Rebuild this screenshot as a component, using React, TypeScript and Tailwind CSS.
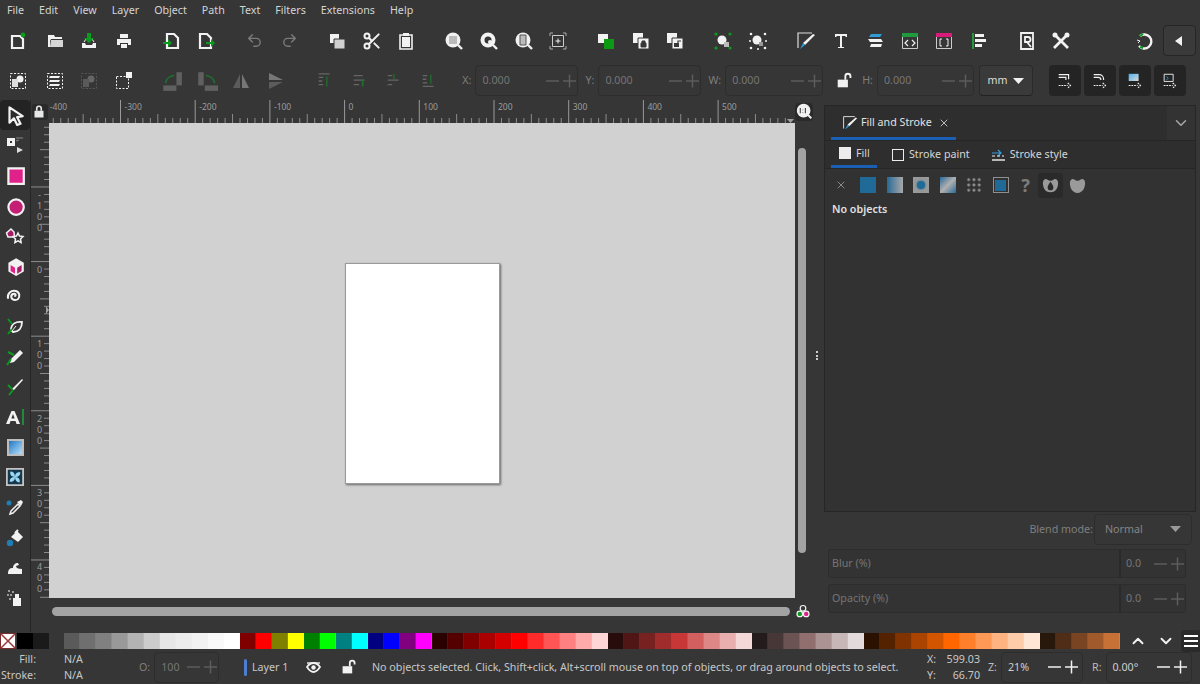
import type { ReactNode } from "react";
import { Scissors, Undo2, Redo2, ChevronDown, ChevronUp, X } from "lucide-react";

const W = "#f2f2f2";
const G = "#0a9a1e";
const D = "#7a7a7a";
const B = "#1f7fb5";
const P = "#e0218a";

function Ic({ children, size = 20, className = "" }: { children: ReactNode; size?: number; className?: string }) {
  return (
    <svg width={size} height={size} viewBox="0 0 20 20" fill="none" className={className}>
      {children}
    </svg>
  );
}

function LockIc({ open = false, size = 16, color = W, className = "" }: { open?: boolean; size?: number; color?: string; className?: string }) {
  return (
    <Ic size={size} className={className}>
      <path d="M2 9h12v9H2z" fill={color} />
      {open
        ? <path d="M11 9V5a3 3 0 0 1 6 0v2" stroke={color} strokeWidth="2.200" />
        : <path d="M5 9V6a3 3 0 0 1 6 0v3" stroke={color} strokeWidth="2.200" transform="translate(0 0)" />}
    </Ic>
  );
}

const doc = "M5 3h7l4 4v10H5z";

const topGroups: ReactNode[][] = [
  [
    <Ic><path d="M4 5h8l3 3v9H4z" fill="none" stroke={W} strokeWidth="2.200" /><circle cx="15" cy="4" r="2.400" fill={G} /></Ic>,
    <Ic><path d="M3 4h6l1 2h7v2H6L5 10v6H3z" fill={W} /><path d="M6 9h12v7H5z" fill={W} opacity=".85" /></Ic>,
    <Ic><path d="M3 12h3l1 2h6l1-2h3v5H3z" fill={W} /><path d="M5 11l2-3h6l2 3" stroke={W} /><path d="M8 2h4v5h3l-5 5-5-5h3z" fill={G} /></Ic>,
    <Ic><path d="M6 3h8v4H6z" fill={W} /><path d="M3 8h14v6h-3v-2H6v2H3z" fill={W} /><path d="M7 13h6v4H7z" fill={W} /></Ic>,
  ],
  [
    <Ic><path d={doc} stroke={W} strokeWidth="2.200" /><path d="M1 11h5V8l4 4-4 4v-3H1z" fill={G} /></Ic>,
    <Ic><path d={doc} stroke={W} strokeWidth="2.200" transform="translate(-2 0)" /><path d="M9 11h5V8l4 4-4 4v-3H9z" fill={G} /></Ic>,
  ],
  [<Undo2 size={17} color={D} />, <Redo2 size={17} color={D} />],
  [
    <Ic><path d="M3 3h9v9H3z" fill={W} /><path d="M7 8h11v10H7z" fill="#d0d0d0" stroke="#363636" /></Ic>,
    <Scissors size={20} color={W} strokeWidth={2.400} />,
    <Ic><path d="M4 4h12v14H4z" fill="none" stroke={W} strokeWidth="1.600" /><path d="M6 6h8v10H6z" fill={W} /><path d="M7 2h6v3H7z" fill={W} /></Ic>,
  ],
  [
    <Ic><circle cx="9" cy="9" r="7.500" fill={W} /><path d="M5 5h8v8H5z" fill="#bbb" /><path d="M14 14l4 4" stroke={W} strokeWidth="2.400" /></Ic>,
    <Ic><circle cx="9" cy="9" r="7.500" fill={W} /><circle cx="9" cy="9" r="3.500" fill="#363636" /><circle cx="11" cy="11" r="2" fill={W} /><path d="M14 14l4 4" stroke={W} strokeWidth="2.400" /></Ic>,
    <Ic><circle cx="9" cy="9" r="7.500" fill={W} /><path d="M6 4h6v10H6z" fill="#bbb" stroke="#555" /><path d="M14 14l4 4" stroke={W} strokeWidth="2.400" /></Ic>,
    <Ic><path d="M2 5V2h3M15 2h3v3M18 15v3h-3M5 18H2v-3" stroke="#aaa" /><path d="M4.500 4.500h11v11h-11z" stroke="#ccc" /><path d="M10 7.500v5M7.500 10h5" stroke={W} /></Ic>,
  ],
  [
    <Ic><path d="M2 3h10v9H2z" fill={W} /><path d="M8 8h10v10H8z" fill="#0c9a12" /></Ic>,
    <Ic><path d="M2 2h10v10H2z" fill={W} /><path d="M7 7h11v11H7z" fill={W} stroke="#363636" /><path d="M10 12h5v4h-5zM11 12v-2h3v2" fill="#363636" stroke="#363636" /></Ic>,
    <Ic><path d="M2 2h10v10H2z" fill={W} /><path d="M7 7h11v11H7z" fill={W} stroke="#363636" /><path d="M9 12h5v4H9z" fill="#363636" /><path d="M13 12v-2h3" stroke="#363636" strokeWidth="1.200" /></Ic>,
  ],
  [
    <Ic><circle cx="9" cy="9" r="4.500" fill={W} /><path d="M11 11h5v5h-5z" fill="#bbb" /><g fill={G}><circle cx="3" cy="3" r="1.600" /><circle cx="17" cy="3" r="1.600" /><circle cx="3" cy="17" r="1.600" /><circle cx="17" cy="17" r="1.600" /></g></Ic>,
    <Ic><circle cx="9" cy="9" r="4.500" fill={W} /><path d="M11 11h4v4h-4z" fill="#999" /><g fill={W}><circle cx="3" cy="3" r="1.300" /><circle cx="17" cy="3" r="1.300" /><circle cx="3" cy="17" r="1.300" /><circle cx="17" cy="17" r="1.300" /><circle cx="2" cy="10" r="1" /><circle cx="18" cy="10" r="1" /><circle cx="10" cy="18" r="1" /></g></Ic>,
  ],
  [
    <Ic><path d="M2 17V2h14" stroke="#ddd" strokeWidth="1.200" /><path d="M17 3l2 1L9 14l-2-2z" fill={W} /><path d="M7 12l2 2-5 4z" fill="#2f9bd8" /></Ic>,
    <Ic><path d="M4 3h12v3h-1l-1-1h-3v11h2v1H7v-1h2V5H6L5 6H4z" fill={W} /></Ic>,
    <Ic><path d="M6 3h11l-2 3H4z" fill="#2f9bd8" /><path d="M3 8h13l2 3H5z" fill={W} /><path d="M6 13h11l-1 3H5z" fill={W} /></Ic>,
    <Ic><path d="M2.500 2.500h15v15h-15z" stroke="#ccc" /><path d="M2 2h16v4H2z" fill="#1f9a3c" /><path d="M8 9l-3 3 3 3M12 9l3 3-3 3" stroke={W} strokeWidth="1.200" /></Ic>,
    <Ic><path d="M2.500 2.500h15v15h-15z" stroke="#ccc" /><path d="M2 2h16v4H2z" fill="#d81b78" /><path d="M8 8H6v7h2M12 8h2v7h-2" stroke={W} /></Ic>,
    <Ic><path d="M3 2h2v16H3z" fill="#1f9a3c" /><path d="M6 3h9v3H6zM6 8h11v3H6zM6 13h7v3H6z" fill={W} /></Ic>,
  ],
  [
    <Ic><path d="M4 2h12v16H4z" stroke={W} strokeWidth="1.800" /><path d="M8 6h3a2.500 2.500 0 0 1 0 5H8zM10 11l4 5" stroke={W} strokeWidth="1.800" /></Ic>,
    <Ic><path d="M3 3l14 14M17 3L3 17" stroke={W} strokeWidth="2.800" /><circle cx="4" cy="4" r="2.500" fill={W} /><circle cx="16" cy="4" r="2.500" fill={W} /></Ic>,
  ],
];

const bottomIcons: ReactNode[] = [
  <Ic><path d="M2.500 2.500h15v15h-15z" stroke={W} strokeDasharray="2 1.500" /><circle cx="12" cy="8" r="3.500" fill={W} /><path d="M4 8h6v8H4z" fill="#ddd" /></Ic>,
  <Ic><path d="M2.500 2.500h15v15h-15z" stroke={W} strokeDasharray="2 1.500" /><path d="M5 5h10L14 7H4zM5 9h10l-1 2H4zM5 13h10l-1 2H4z" fill={W} /></Ic>,
  <Ic><path d="M2.500 2.500h15v15h-15z" stroke="#555" strokeDasharray="2 1.500" /><circle cx="12" cy="8" r="3.500" fill="#666" /><path d="M4 8h6v8H4z" fill="#5a5a5a" /></Ic>,
  <Ic><path d="M2.500 5.500h12v12h-12z" stroke={W} strokeDasharray="2 1.500" /><path d="M12 1h6v6h-6z" fill={W} /></Ic>,
];
const dimTransform: ReactNode[] = [
  <Ic size={22}><path d="M2 14h12v5H2z" fill="#606060" /><path d="M14 2h5v12h-5z" fill="#606060" /><path d="M4 12a9 9 0 0 1 8-7" stroke="#1f6e2c" strokeWidth="1.500" /></Ic>,
  <Ic size={22}><path d="M8 14h12v5H8z" fill="#606060" /><path d="M2 2h5v12H2z" fill="#606060" /><path d="M9 5a9 9 0 0 1 8 7" stroke="#1f6e2c" strokeWidth="1.500" /></Ic>,
  <Ic><path d="M9 3v14H2z" fill="#5c5c5c" /><path d="M11 3v14h7z" fill="#777" /></Ic>,
  <Ic><path d="M3 9h14L3 2z" fill="#777" /><path d="M3 11h14L3 18z" fill="#5c5c5c" /></Ic>,
];
const alignIcons: ReactNode[] = [
  <Ic size={18}><path d="M3 2h12M3 6h5M3 10h4M3 14h5" stroke="#666" strokeWidth="1.500" /><path d="M12 5v11" stroke="#1f6e2c" strokeWidth="1.500" /></Ic>,
  <Ic size={18}><path d="M3 4h10M3 9h12M3 14h6" stroke="#666" strokeWidth="1.500" /><path d="M13 8v8" stroke="#1f6e2c" strokeWidth="2" /></Ic>,
  <Ic size={18}><path d="M3 4h5M3 9h12M3 14h5" stroke="#666" strokeWidth="1.500" /><path d="M10 2v6" stroke="#1f6e2c" strokeWidth="1.500" /></Ic>,
  <Ic size={18}><path d="M3 16h12M3 4h5M3 8h4M3 12h5" stroke="#666" strokeWidth="1.500" /><path d="M12 3v10" stroke="#1f6e2c" strokeWidth="1.500" /></Ic>,
];

const snapIcons: ReactNode[] = [
  <Ic size={18}><path d="M3 3h11v5M3 6h8v3" stroke={W} strokeWidth="1.300" /><path d="M3 15h10M13 12l3 3-3 3" stroke={W} strokeWidth="1.300" strokeDasharray="2 1" /></Ic>,
  <Ic size={18}><path d="M3 3h6a5 5 0 0 1 5 5v1M3 6h5a3 3 0 0 1 3 3" stroke={W} strokeWidth="1.300" /><path d="M3 15h10M13 12l3 3-3 3" stroke={W} strokeWidth="1.300" strokeDasharray="2 1" /></Ic>,
  <Ic size={18}><path d="M3 2h11v8H3z" fill="url(#snapGrad)" /><path d="M3 15h10M13 12l3 3-3 3" stroke={W} strokeWidth="1.300" strokeDasharray="2 1" /></Ic>,
  <Ic size={18}><path d="M3.500 2.500h10v8h-10z" stroke={W} /><path d="M6 5l2 2-2 2" stroke="#3aa0e0" /><path d="M3 15h10M13 12l3 3-3 3" stroke={W} strokeWidth="1.300" strokeDasharray="2 1" /></Ic>,
];

const toolIcons: ReactNode[] = [
  <Ic size={22}><path d="M5 3l12 8-5 1 3 6-3 1-3-6-4 4z" fill="#2a2a2a" stroke={W} strokeWidth="2" strokeLinejoin="round" /></Ic>,
  <Ic><path d="M2 3h8v8H2z" fill={W} /><path d="M5 6h2v2H5z" fill="#333" /><path d="M11 3h7M11 6l3-1" stroke="#888" /><path d="M12 12l6 3-6 3z" fill="#ddd" /></Ic>,
  <Ic size={22}><path d="M4 4h14v14H4z" fill={P} stroke={W} strokeWidth="2" /></Ic>,
  <Ic size={22}><circle cx="11" cy="11" r="7" fill="#c41f74" stroke={W} strokeWidth="2" /></Ic>,
  <Ic><path d="M6 3l3 3 .5 5H3L1.500 7z" fill="#a81b68" stroke={W} strokeWidth="1.500" /><path d="M13 7l1.500 3 3.500.5-2.500 2.500.6 3.500-3.100-1.700-3.100 1.700.6-3.500L8 10.500l3.500-.5z" fill="#333" stroke={W} strokeWidth="1.500" /></Ic>,
  <Ic size={22}><path d="M11 3l7 4v8l-7 4-7-4V7z" fill={W} /><path d="M6 9l4 2.500V17l-4-2.500z" fill={P} /><path d="M16 9l-4 2.500V17l4-2.500z" fill="#a81b68" /></Ic>,
  <Ic><path d="M10 10c1.500-1 0-3-2-2-3 1.500-2 6 2 6 5 0 6-7 1-9-5-1.500-9 3-8 7" stroke={W} strokeWidth="2" strokeLinecap="round" /></Ic>,
  <Ic><path d="M6 14C6 8 11 5 17 6c0 6-3 10-9 10z" stroke={W} strokeWidth="1.800" /><path d="M7 15l4-5" stroke={W} /><path d="M3 18l4-5M3 3l4 5" stroke={G} strokeWidth="2" /></Ic>,
  <Ic><path d="M15 3l3 3-9 9-4 1 1-4z" fill={W} /><path d="M2 18l4-6M3 5l6 3" stroke={G} strokeWidth="2" /></Ic>,
  <Ic><path d="M17 2l1 1-9 10-2-1z" fill={W} /><path d="M4 18l4-5M3 8l4 4" stroke={G} strokeWidth="2" /></Ic>,
  <Ic size={20}><path d="M1 17L6.500 4h3L15 17h-3.500l-1-3h-5l-1 3zM6.300 11.500h3.400L8 7z" fill={W} /><path d="M17 2h2v16h-2z" fill="#1f8a3c" /></Ic>,
  <div className="size-[17px] border-2 border-[#bdbdbd] bg-gradient-to-br from-[#1577c2] to-[#b5e0fb]" />,
  <Ic size={18}><path d="M1 1h18v18H1z" fill="#15384d" stroke="#c4c4c4" strokeWidth="2" /><path d="M10 10C5 10 4 6 5 4c3 0 5 2 5 6zM10 10c5 0 6 4 5 6-3 0-5-2-5-6zM10 10c0-5 4-6 6-5 0 3-2 5-6 5zM10 10c0 5-4 6-6 5 0-3 2-5 6-5z" fill="#9ad8f5" /></Ic>,
  <Ic><path d="M6 13l7-7 2 2-7 7-3 1z" fill="#333" stroke={W} strokeWidth="1.500" /><path d="M12 4l4-2 2 2-2 4z" fill={W} /><circle cx="4" cy="5" r="2.500" fill={B} /></Ic>,
  <Ic><path d="M6 9l6-6 6 6-5 5z" fill={W} /><path d="M10 5l3-3" stroke={W} strokeWidth="2" /><circle cx="5" cy="15" r="3.200" fill={B} /></Ic>,
  <Ic><path d="M3 16c0-5 2-6 5-6 0-3 2-5 5-5l1 2-3 1c0 2 2 3 6 3v5z" fill={W} /></Ic>,
  <Ic><path d="M8 10h8v8H8zM10 6h4v4h-4z" fill={W} /><g fill="#bbb"><circle cx="4" cy="3" r="1" /><circle cx="8" cy="4" r="1" /><circle cx="3" cy="7" r="1" /><circle cx="6" cy="7" r="1" /><circle cx="5" cy="11" r="1" /></g></Ic>,
];

const palette = [
  "#5a5a5a", "#6f6f6f", "#808080", "#999999", "#b3b3b3", "#cccccc", "#e6e6e6", "#ececec", "#f2f2f2", "#f9f9f9", "#ffffff",
  "#800000", "#ff0000", "#808000", "#ffff00", "#008000", "#00ff00", "#008080", "#00ffff", "#000080", "#0000ff", "#800080", "#ff00ff",
  "#2b0000", "#550000", "#800000", "#aa0000", "#d40000", "#ff0000", "#ff2a2a", "#ff5555", "#ff8080", "#ffaaaa", "#ffd5d5",
  "#280b0b", "#501616", "#782121", "#a02c2c", "#c83737", "#d35f5f", "#de8787", "#e9afaf", "#f4d7d7",
  "#241c1c", "#483737", "#6c5353", "#916f6f", "#ac9393", "#c8b7b7", "#e3dbdb",
  "#2b1100", "#552200", "#803300", "#aa4400", "#d45500", "#ff6600", "#ff7f2a", "#ff9955", "#ffb380", "#ffccaa", "#ffe6d5",
  "#28170b", "#502d16", "#784421", "#a05a2c", "#c87137",
];

function Cell({ children, extra = false }: { children: ReactNode; extra?: boolean }) {
  return <div className={`flex w-[34.600px] items-center justify-center ${extra ? "mr-[2px]" : ""}`}>{children}</div>;
}

function Spin({ label, value, w, dim = true }: { label: string; value: string; w: string; dim?: boolean }) {
  return (
    <div className="flex items-center gap-[4px]">
      <span className={dim ? "text-[#7e7e7e]" : "text-[#bdbdbd]"}>{label}</span>
      <div className={`flex h-[31px] items-center justify-between rounded-[4px] border border-[#2d2d2d] pl-[6px] ${dim ? "pr-0" : "pr-[3px]"} ${w}`}>
        <span className={dim ? "text-[#757575]" : "text-[#cfcfcf]"}>{value}</span>
        <PlusMinus dim={dim} />
      </div>
    </div>
  );
}

function PlusMinus({ dim = true }: { dim?: boolean }) {
  const c = dim ? "#5c5c5c" : "#f0f0f0";
  return (
    <svg width="32" height="16" viewBox="0 0 32 16" fill="none">
      <path d="M1 8h13M18 8h13M24.500 1.500v13" stroke={c} strokeWidth="1.500" />
    </svg>
  );
}

function TopRuler() {
  const labels = ["-400", "-300", "-200", "-100", "0", "100", "200", "300", "400", "500"];
  return (
    <svg width="746" height="23" viewBox="0 0 746 23" className="block">
      {Array.from({ length: 100 }, (_, i) => {
        const x = i * 7.47 - 3.2;
        if (x < 0 || x > 744) return null;
        const h = i % 10 === 0 ? 23 : i % 5 === 0 ? 9 : 5;
        return <line key={i} x1={x} x2={x} y1={23 - h} y2={23} stroke={i % 10 === 0 ? "#9a9a9a" : "#8c8c8c"} strokeWidth="1" />;
      })}
      {labels.map((t, i) => (
        <text key={t} x={i * 74.7 + 0.8} y="10" fontSize="8.500" fill="#9c9c9c" fontFamily="Noto Sans, sans-serif">
          {t}
        </text>
      ))}
      <path d="M738 19h7l-3.500 4z" fill="#a0a0a0" />
    </svg>
  );
}

function LeftRuler() {
  const labels: [number, string][] = [[187, "-100"], [262, "0"], [336, "100"], [411, "200"], [485, "300"], [559, "400"]];
  return (
    <svg width="18" height="475" viewBox="0 0 18 475" className="block">
      {Array.from({ length: 64 }, (_, i) => {
        const y = i * 7.46 + 4.3;
        const w = i % 10 === 8 ? 18 : i % 5 === 3 ? 9 : 5;
        return <line key={i} x1={18 - w} x2={18} y1={y} y2={y} stroke="#8c8c8c" strokeWidth="1" />;
      })}
      {labels.map(([y, t]) =>
        t.split("").map((c, i) => (
          <text key={`${y}-${i}`} x="8.500" y={y - 123 + 11 + i * 11} fontSize="9" textAnchor="middle" fill="#9c9c9c" fontFamily="Noto Sans, sans-serif">
            {c}
          </text>
        )),
      )}
      <path d="M15 183l3 4-3 4z" fill="#a0a0a0" />
    </svg>
  );
}

export default function App() {
  return (
    <div className="flex h-[684px] w-[1200px] flex-col overflow-hidden bg-[#363636] font-['Noto_Sans','Open_Sans',sans-serif] text-[10.700px] text-[#d6d6d6]">
      <div className="flex h-[20px] items-center pl-[7px] text-[#d4d4d4]">
        {["File", "Edit", "View", "Layer", "Object", "Path", "Text", "Filters", "Extensions", "Help"].map((m) => (
          <span key={m} className="mr-[15px]">{m}</span>
        ))}
      </div>

      <div className="flex h-[41px] items-center pl-px">
        {topGroups.map((group, i) => (
          <div key={i} className="mr-[13.400px] flex">
            {group.map((ic, j) => <Cell key={j} extra={i === 0 && j === 0}>{ic}</Cell>)}
          </div>
        ))}
        <div className="ml-[35px] flex items-center">
          <Cell>
            <Ic><path d="M6 5a7 7 0 1 1-1 10" stroke={W} strokeWidth="2.400" /><path d="M6 5l3-2" stroke={G} strokeWidth="2" /><path d="M3 9l3 1-2 2" stroke={W} /><path d="M6 16l3 1" stroke={G} strokeWidth="2" /></Ic>
          </Cell>
          <div className="ml-[1px] flex h-[31px] w-[33px] items-center justify-center rounded-[4px] border border-[#262626] bg-[#3a3a3a]">
            <svg width="8" height="10" viewBox="0 0 8 10"><path d="M7 0v10L0 5z" fill={W} /></svg>
          </div>
        </div>
      </div>

      <div className="flex h-[39px] items-center pl-px">
        <div className="mr-[13.600px] flex">{bottomIcons.map((ic, i) => <Cell key={i} extra={i === 0}>{ic}</Cell>)}</div>
        <div className="mr-[14.600px] flex">{dimTransform.map((ic, i) => <Cell key={i}>{ic}</Cell>)}</div>
        <div className="flex">{alignIcons.map((ic, i) => <Cell key={i}>{ic}</Cell>)}</div>
        <div className="ml-[16px] flex items-center gap-[7px]">
          <Spin label="X:" value="0.000" w="w-[103px]" />
          <Spin label="Y:" value="0.000" w="w-[103px]" />
          <Spin label="W:" value="0.000" w="w-[98px]" />
        </div>
        <div className="ml-[12px] flex w-[18px] justify-center">
          <LockIc open size={17} />
        </div>
        <div className="ml-[9px]"><Spin label="H:" value="0.000" w="w-[97px]" /></div>
        <div className="ml-[5px] flex h-[31px] w-[54px] items-center justify-center gap-[6px] rounded-[4px] border border-[#2a2a2a] border-b-[#222] bg-[#3a3a3a] text-[#dcdcdc]">
          mm
          <svg width="11" height="6" viewBox="0 0 11 6"><path d="M0 0h11L5.500 6z" fill={W} /></svg>
        </div>
        <div className="ml-[16px] flex gap-[3px]">
          {snapIcons.map((ic, i) => (
            <div key={i} className="flex h-[31px] w-[32px] items-center justify-center rounded-[4px] bg-[#242424]">{ic}</div>
          ))}
        </div>
      </div>

      <svg width="0" height="0" className="absolute">
        <defs>
          <linearGradient id="snapGrad" x1="0" y1="0" x2="1" y2="1">
            <stop offset="0" stopColor="#4fb3ee" />
            <stop offset="1" stopColor="#d8d8d8" />
          </linearGradient>
        </defs>
      </svg>

      <div className="flex h-[532px]">
        <div className="flex w-[31px] shrink-0 flex-col items-center border-r border-[#262626]">
          {toolIcons.map((ic, i) => (
            <div key={i} className={`flex h-[30.200px] w-full shrink-0 items-center justify-center ${i === 0 ? "rounded-[4px] bg-[#232323]" : ""}`}>
              {ic}
            </div>
          ))}
        </div>

        <div className="flex w-[793px] shrink-0 flex-col">
          <div className="flex h-[23px]">
            <div className="flex w-[18px] items-center justify-center">
              <div className="flex size-[16px] items-center justify-center rounded-[3px] bg-[#2a2a2a]">
                <LockIc size={15} color="#e8e8e8" />
              </div>
            </div>
            <TopRuler />
            <div className="ml-[1px] flex w-[16px] items-center justify-center">
              <div className="flex size-[18px] shrink-0 items-center justify-center rounded-[4px] bg-[#2a2a2a]">
                <Ic size={17}><circle cx="9" cy="9" r="8" fill={W} /><path d="M5 6v6M8 8v.500M8 11v.500M11 6v6" stroke="#333" strokeWidth="1.200" /><path d="M14 14l4 4" stroke={W} strokeWidth="2.400" /></Ic>
              </div>
            </div>
          </div>
          <div className="flex h-[475px]">
            <LeftRuler />
            <div className="relative w-[746px] bg-[#d1d1d1]">
              <div className="absolute left-[296px] top-[140px] h-[221px] w-[155px] border border-[#9a9a9a] bg-white shadow-[1px_1px_2px_rgba(0,0,0,0.5)]" />
            </div>
            <div className="flex w-[29px] items-start pl-[3px]">
              <div className="mt-[25px] h-[405px] w-[8px] rounded-full bg-[#a3a3a3]" />
              <div className="ml-[10px] mt-[228px] flex flex-col gap-[1.500px]">
                <span className="size-[2px] rounded-full bg-white" />
                <span className="size-[2px] rounded-full bg-white" />
                <span className="size-[2px] rounded-full bg-white" />
              </div>
            </div>
          </div>
          <div className="flex items-center pl-[21px] pt-[5px]">
            <div className="h-[9px] w-[738px] rounded-full bg-[#a3a3a3]" />
            <div className="ml-[5px] flex size-[16px] items-center justify-center">
              <Ic size={17}><circle cx="10" cy="6" r="3.500" stroke={W} strokeWidth="1.500" /><circle cx="6" cy="13" r="3.500" fill={G} stroke={W} strokeWidth="1.500" /><circle cx="14" cy="13" r="3.500" fill={P} stroke={W} strokeWidth="1.500" /></Ic>
            </div>
          </div>
        </div>

        <div className="flex w-[372px] shrink-0 flex-col pt-[5px]">
          <div className="flex h-[407px] flex-col border border-[#262626] bg-[#323232]">
            <div className="flex h-[35px] shrink-0 items-stretch justify-between border-b border-[#262626] bg-[#2e2e2e]">
              <div className="ml-[6px] flex w-[125px] items-center gap-[3px] border-b-[3px] border-[#1a5fb4] pl-[11px] pt-[2px] text-[#e2e2e2]">
                <Ic size={16}><path d="M2 17V2h14" stroke="#ddd" strokeWidth="1.200" /><path d="M17 3l2 1L9 14l-2-2z" fill={W} /><path d="M7 12l2 2-5 4z" fill="#2f9bd8" /></Ic>
                <span>Fill and Stroke</span>
                <X size={12} color="#bdbdbd" className="ml-[3px]" />
              </div>
              <div className="flex w-[28px] items-center justify-center bg-[#333]">
                <ChevronDown size={18} color="#a8a8a8" />
              </div>
            </div>
            <div className="flex h-[28px] shrink-0 items-stretch border-b border-[#262626] bg-[#2e2e2e] pl-[6px]">
              <div className="flex w-[46px] items-center gap-[5px] border-b-[3px] border-[#1a5fb4] pl-[8px]">
                <div className="size-[12px] bg-[#ececec]" />
                <span>Fill</span>
              </div>
              <div className="ml-[15px] flex items-center gap-[5px]">
                <div className="size-[12px] border-[1.500px] border-[#ececec]" />
                <span>Stroke paint</span>
              </div>
              <div className="ml-[21px] flex items-center gap-[5px]">
                <svg width="14" height="12" viewBox="0 0 14 12" fill="none">
                  <path d="M1 4h8M7 1l3 3-3 3" stroke="#3aa0e0" strokeWidth="1.200" />
                  <path d="M1 7h3M6 7h3M11 7h2" stroke={W} />
                  <path d="M1 11h13" stroke={W} strokeWidth="1.400" />
                </svg>
                <span>Stroke style</span>
              </div>
            </div>
            <div className="flex h-[32px] shrink-0 items-center pl-[10px]">
              <X size={12} color="#8a8a8a" />
              <div className="ml-[13px] flex items-center gap-[10.500px]">
                <div className="size-[16px] bg-[#1f6a96]" />
                <div className="size-[16px] bg-gradient-to-r from-[#1f6a96] to-[#a8a8a8]" />
                <div className="flex size-[16px] items-center justify-center bg-[#9a9a9a]"><div className="size-[8px] rounded-full bg-[#1f6a96] shadow-[0_0_3px_#1f6a96]" /></div>
                <div className="size-[16px] bg-gradient-to-br from-[#1f6a96] via-[#b0b0b0] to-[#1f6a96]" />
                <div className="size-[16px] bg-[radial-gradient(#8f8f8f_35%,transparent_40%)] bg-[length:5.300px_5.300px]" />
                <div className="flex size-[16px] items-center justify-center border border-[#8f8f8f]"><div className="size-[11px] bg-[#1f6a96]" /></div>
              </div>
              <span className="ml-[10px] w-[14px] text-center text-[18px] font-bold leading-none text-[#7c7c7c]">?</span>
              <div className="ml-[5px] flex h-[25px] w-[25px] items-center justify-center rounded-[3px] bg-[#2a2a2a]">
                <Ic size={19}><path d="M10 17C4 17 2 12 2 7c0-3 3-5 5-3 1 1 2 1 3 1s2 0 3-1c2-2 5 0 5 3 0 5-2 10-8 10z" fill="#9a9a9a" /><path d="M10 6c2 3 3 4 3 6a3 3 0 0 1-6 0c0-2 1-3 3-6z" fill="#2a2a2a" /></Ic>
              </div>
              <Ic size={19} className="ml-[5px]"><path d="M10 18C4 17 2 12 2 7c0-3 3-5 5-3 1 1 2 1 3 1s2 0 3-1c2-2 5 0 5 3 0 5-2 10-8 11z" fill="#9a9a9a" /></Ic>
            </div>
            <div className="pl-[7px] font-semibold text-[#e0e0e0]">No objects</div>
          </div>

          <div className="flex h-[34px] items-center justify-end pr-[4px]">
            <span className="mr-[1px] text-[#7e7e7e]">Blend mode:</span>
            <div className="flex h-[31px] w-[98px] items-center justify-between rounded-[4px] border border-[#2d2d2d] pl-[10px] pr-[10px] text-[#858585]">
              Normal
              <svg width="11" height="6" viewBox="0 0 11 6"><path d="M0 0h11L5.500 6z" fill="#9a9a9a" /></svg>
            </div>
          </div>
          {["Blur (%)", "Opacity (%)"].map((t) => (
            <div key={t} className="mb-[3px] ml-[4px] mr-[10px] mt-[3px] flex h-[29px] items-center rounded-[3px] border border-[#2d2d2d] bg-[#333] text-[#757575]">
              <span className="flex-1 border-r-2 border-[#2a2a2a] pl-[3px] leading-[27px]">{t}</span>
              <span className="ml-[5px] w-[27px]">0.0</span>
              <PlusMinus />
            </div>
          ))}
        </div>
      </div>

      <div className="flex h-[18px] items-center">
        <div className="relative size-[16px] shrink-0 border border-[#7a2d2d] bg-white">
          <svg width="14" height="14" viewBox="0 0 14 14" className="absolute"><path d="M0 0l14 14M14 0L0 14" stroke="#9c3a3a" strokeWidth="1.500" /></svg>
        </div>
        <div className="ml-px size-[16px] shrink-0 bg-black" />
        <div className="size-[16px] shrink-0 bg-[#1a1a1a]" />
        <div className="ml-[15px] flex shrink-0">
          {palette.map((c, i) => (
            <div key={i} className="h-[16px] w-[16px] shrink-0 border-r border-white/10" style={{ backgroundColor: c }} />
          ))}
        </div>
        <div className="ml-[9px] flex items-center">
          <ChevronUp size={18} color={W} strokeWidth={2.500} />
          <ChevronDown size={18} color={W} strokeWidth={2.500} className="ml-[10px]" />
          <div className="ml-[6px] flex h-[22px] w-[20px] shrink-0 flex-col items-center justify-center gap-[3px] rounded-[4px] bg-[#2a2a2a]">
            <span className="h-[2px] w-[14px] bg-white" />
            <span className="h-[2px] w-[14px] bg-white" />
            <span className="h-[2px] w-[14px] bg-white" />
          </div>
        </div>
      </div>

      <div className="flex h-[34px] items-center text-[#c8c8c8]">
        <div className="grid w-[36px] justify-items-end leading-[16px]">
          <span>Fill:</span>
          <span>Stroke:</span>
        </div>
        <div className="ml-[28px] grid w-[75px] leading-[16px]">
          <span>N/A</span>
          <span>N/A</span>
        </div>
        <div className="w-[80px]"><Spin label="O:" value="100" w="w-[66px]" /></div>
        <div className="ml-[25px] h-[17px] w-[3px] rounded bg-[#4a7fd4]" />
        <span className="ml-[5px] w-[54px]">Layer 1</span>
        <svg width="15" height="13" viewBox="0 0 15 13" fill="none">
          <path d="M1 6c2-3 4-4 6.500-4S12 3 14 6c-2 3-4 5-6.500 5S3 9 1 6z" stroke={W} strokeWidth="1.800" />
          <circle cx="7.500" cy="6.500" r="2.200" fill={W} />
          <path d="M1 2h13" stroke={W} strokeWidth="1.400" />
        </svg>
        <LockIc open size={16} className="ml-[20px]" />
        <span className="ml-[15px] w-[555px] whitespace-nowrap">No objects selected. Click, Shift+click, Alt+scroll mouse on top of objects, or drag around objects to select.</span>
        <div className="grid w-[53px] grid-cols-2 leading-[16px]">
          <span className="w-[14px]">X:</span>
          <span className="justify-self-end">599.03</span>
          <span className="w-[14px]">Y:</span>
          <span className="justify-self-end">66.70</span>
        </div>
        <div className="ml-[8px]"><Spin label="Z:" value="21%" w="w-[82px]" dim={false} /></div>
        <div className="ml-[9px]"><Spin label="R:" value="0.00°" w="w-[86px]" dim={false} /></div>
      </div>
    </div>
  );
}
